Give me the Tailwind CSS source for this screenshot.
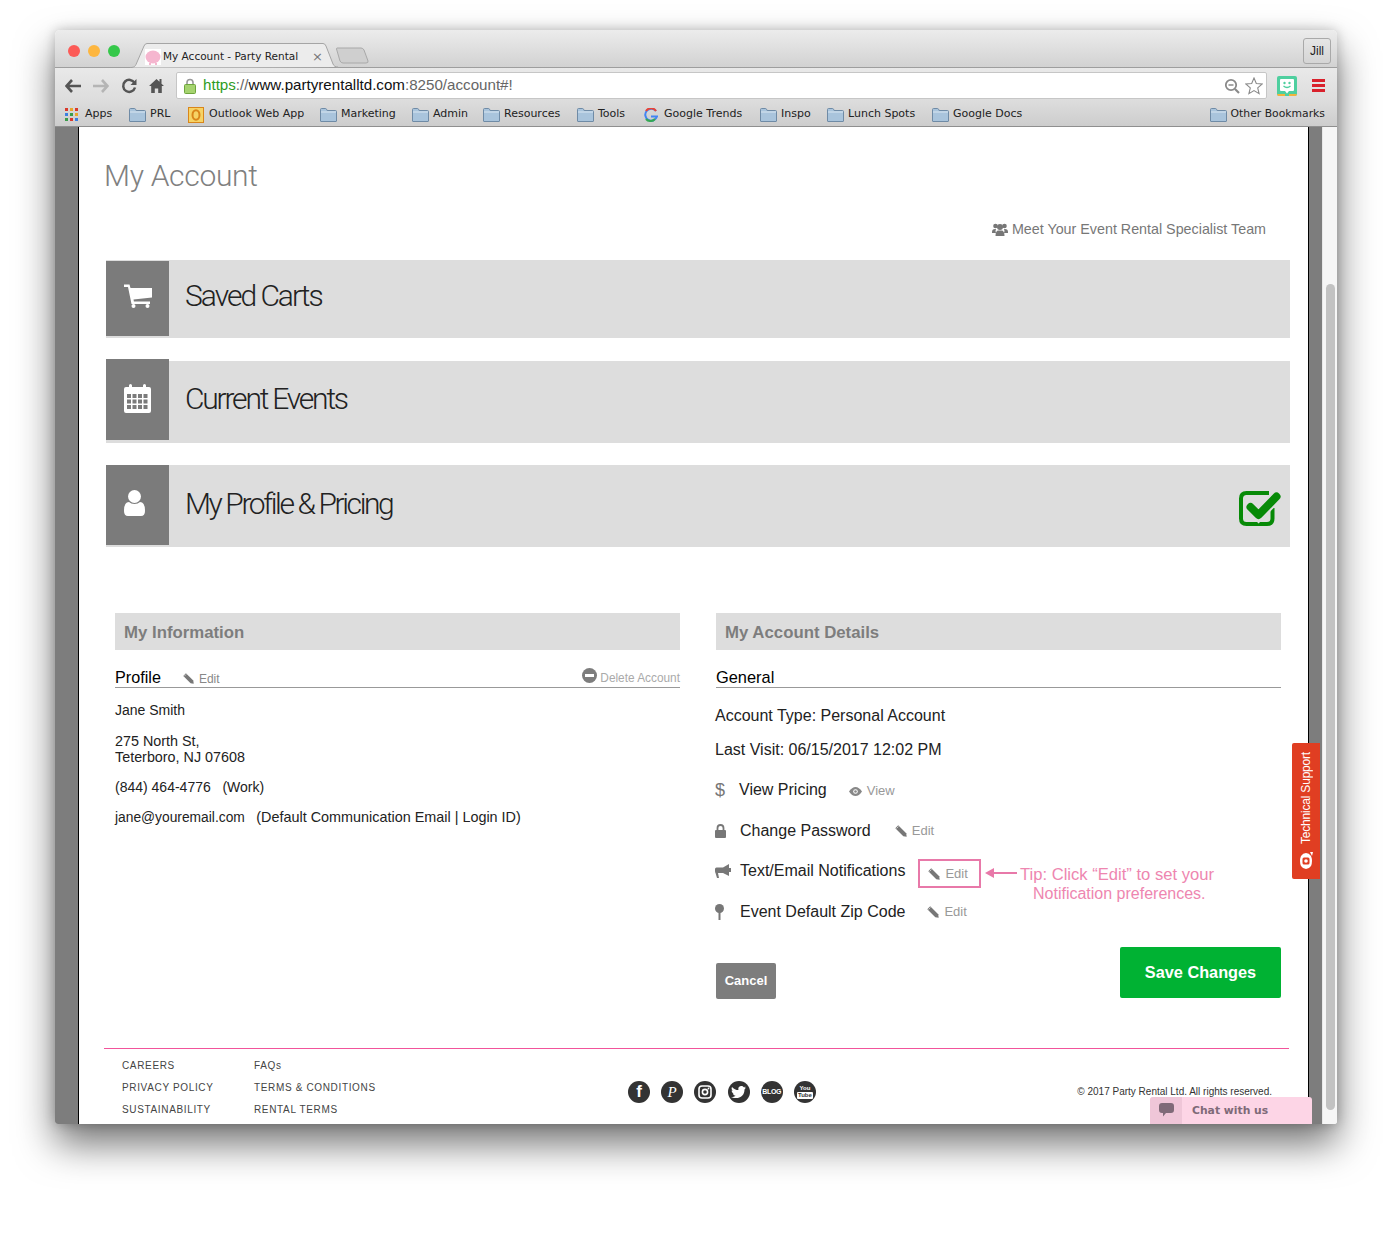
<!DOCTYPE html>
<html lang="en">
<head>
<meta charset="UTF-8">
<title>My Account - Party Rental</title>
<script src="https://cdn.jsdelivr.net/npm/@tailwindcss/browser@4"></script>
</head>
<body class="bg-white font-['Liberation_Sans',Arial,sans-serif]">
<svg class="hidden">
  <symbol id="folder" viewBox="0 0 17 14"><path d="M.5 3V1.500q0-1 1-1h4q.7 0 1 .6l.6 1.400h8.400q1 0 1 1V13q0 .5-.5.5H1q-.5 0-.5-.5z" fill="#a9c4dc" stroke="#6f8ba6"/><path d="M1 4h15" stroke="#d9e6f1"/></symbol>
  <symbol id="pencil" viewBox="0 0 12 12"><path d="M3.200.3.300 3.200l8 8 3.400.5-.5-3.400z" fill="#777"/><path d="M1.500 3.500 3.500 1.500" stroke="#ddd" stroke-width=".8"/></symbol>
</svg>

<div class="ml-[55px] pt-[30px] w-[1282px] h-[1235px]">
<div class="relative w-[1282px] h-[1094px] rounded-t-[5px] rounded-b-[3px] flex flex-col overflow-hidden shadow-[0_20px_38px_rgba(0,0,0,0.55),0_0_12px_rgba(0,0,0,0.22)]">

  <!-- title bar -->
  <div class="h-[38px] shrink-0 flex items-end border-b border-[#9e9e9e] bg-gradient-to-b from-[#ececec] to-[#d2d2d2] relative">
    <div class="flex gap-2 pl-[13px] self-start pt-[15px]">
      <span class="w-3 h-3 rounded-full bg-[#fc5b57]"></span>
      <span class="w-3 h-3 rounded-full bg-[#fdb63f]"></span>
      <span class="w-3 h-3 rounded-full bg-[#35c84a]"></span>
    </div>
    <div class="relative w-[208px] h-[25px] ml-[10px] -mb-px flex items-center pt-[2px] font-['DejaVu_Sans',sans-serif] text-[10.5px] text-[#222]">
      <svg class="absolute inset-0" width="208" height="25" viewBox="0 0 208 25"><path d="M0 24.500c4 0 5-1 6-3L14 3q1-2.500 3-2.500h176q2 0 3 2.500l7 18c1 2 2 3 5 3" fill="#ececec" stroke="#a5a5a5"/></svg>
      <svg class="relative ml-[15px] shrink-0" width="16" height="16" viewBox="0 0 16 16"><rect width="16" height="16" fill="#fff"/><ellipse cx="8" cy="8" rx="7.500" ry="6.500" fill="#f5b6cf"/><path d="M4 14h2v2H4zM10 14h2v2h-2z" fill="#f5b6cf"/></svg>
      <span class="relative ml-[2px] w-[137px] overflow-hidden whitespace-nowrap">My Account - Party Rental</span>
      <span class="relative ml-[12px] text-[13px] text-[#777] leading-none">×</span>
    </div>
    <svg class="ml-[-2px] mb-[3px]" width="33" height="17" viewBox="0 0 33 17"><path d="M1 1h24q2 0 3 2l4 11q.5 2-2 2H7q-2 0-3-2L.5 2Q.5 1 1 1z" fill="#cfcfcf" stroke="#a8a8a8"/></svg>
    <div class="ml-auto mr-[6px] mb-[3px] w-[28px] h-[26px] flex items-center justify-center rounded-[3px] border border-[#a9a9a9] text-[12px] text-[#222]">Jill</div>
  </div>

  <!-- toolbar -->
  <div class="h-[32px] shrink-0 pt-[3px] flex items-center bg-gradient-to-b from-[#e9e9e9] to-[#dddddd]">
    <svg class="ml-[10px]" width="16" height="14" viewBox="0 0 16 14"><path d="M7 1 1.500 7 7 13M2 7h14" fill="none" stroke="#555" stroke-width="2.600"/></svg>
    <svg class="ml-[12px]" width="16" height="14" viewBox="0 0 16 14"><path d="M9 1l5.500 6L9 13M14 7H0" fill="none" stroke="#b5b5b5" stroke-width="2.600"/></svg>
    <svg class="ml-[12px]" width="16" height="16" viewBox="0 0 16 16"><path d="M13.500 5A6 6 0 1 0 14 9.500" fill="none" stroke="#555" stroke-width="2.500"/><path d="M15.500 1v6h-6z" fill="#555"/></svg>
    <svg class="ml-[12px]" width="15" height="15" viewBox="0 0 15 15"><path d="M7.500 1 0 8h2.200v7h3.600v-4.500h3.400V15h3.600V8H15l-2.500-2.300V1h-2v2.800z" fill="#555"/></svg>
    <div class="ml-[12px] w-[1091px] h-[27px] flex items-center bg-white border border-[#c6c6c6] rounded-[2px]">
      <svg class="ml-[7px]" width="12" height="16" viewBox="0 0 12 16"><path d="M3 7V4.500a3 3 0 0 1 6 0V7" fill="none" stroke="#999" stroke-width="1.600"/><rect x=".5" y="6.500" width="11" height="9" rx="1" fill="#a5d36f" stroke="#6ea53c"/></svg>
      <span class="ml-[7px] text-[15.15px] whitespace-nowrap text-[#666]"><span class="text-[#2e9c1f]">https</span>://<span class="text-[#111]">www.partyrentalltd.com</span>:8250/account#!</span>
      <svg class="ml-auto" width="16" height="16" viewBox="0 0 16 16"><circle cx="7" cy="7" r="5.200" fill="none" stroke="#8a8a8a" stroke-width="1.800"/><path d="M4.500 7h5" stroke="#8a8a8a" stroke-width="1.500"/><path d="M11 11l4 4" stroke="#8a8a8a" stroke-width="2.200"/></svg>
      <svg class="ml-[5px] mr-[3px]" width="18" height="18" viewBox="0 0 18 18"><path d="M9 1l2.300 5.500 5.900.5-4.500 3.900 1.400 5.800L9 13.600l-5.100 3.100 1.400-5.800L.8 7l5.900-.5z" fill="#fff" stroke="#8a8a8a" stroke-width="1.100"/></svg>
    </div>
    <svg class="ml-[10px]" width="20" height="20" viewBox="0 0 20 20"><rect width="20" height="20" rx="2" fill="#4fcf9f"/><path d="M4 3h12q1 0 1 1v10q0 1-1 1h-4l-2 2.500L8 15H4q-1 0-1-1V4q0-1 1-1z" fill="#fff"/><circle cx="7.500" cy="7" r="1.200" fill="#4fcf9f"/><circle cx="12.500" cy="7" r="1.200" fill="#4fcf9f"/><path d="M6.500 10q3.500 3 7 0" fill="none" stroke="#4fcf9f" stroke-width="1.300"/><path d="M0 18h8v2H1zM12 18h8l-1 2h-7z" fill="#f2b33d"/></svg>
    <div class="ml-[15px] w-[13px] flex flex-col gap-[2px]">
      <span class="h-[3px] bg-[#d9212c]"></span><span class="h-[3px] bg-[#d9212c]"></span><span class="h-[3px] bg-[#d9212c]"></span>
    </div>
  </div>

  <!-- bookmarks bar -->
  <div class="h-[27px] shrink-0 flex items-center pt-[3px] border-b border-[#8f8f8f] bg-gradient-to-b from-[#dddddd] to-[#cdcdcd] font-['DejaVu_Sans',sans-serif] text-[11px] text-[#222] whitespace-nowrap">
    <div class="ml-[10px] w-[64px] flex items-center gap-[7px] shrink-0">
      <svg width="13" height="13" viewBox="0 0 13 13"><path d="M0 0h3v3H0z" fill="#d9392b"/><path d="M5 0h3v3H5z" fill="#e8a62c"/><path d="M10 0h3v3h-3z" fill="#d9392b"/><path d="M0 5h3v3H0z" fill="#3b7fe0"/><path d="M5 5h3v3H5z" fill="#3a9c4a"/><path d="M10 5h3v3h-3z" fill="#e8a62c"/><path d="M0 10h3v3H0z" fill="#3a9c4a"/><path d="M5 10h3v3H5z" fill="#d9392b"/><path d="M10 10h3v3h-3z" fill="#3b7fe0"/></svg>Apps</div>
    <div class="w-[59px] flex items-center gap-1 shrink-0"><svg width="17" height="14"><use href="#folder"/></svg>PRL</div>
    <div class="w-[132px] flex items-center gap-[5px] shrink-0"><svg width="16" height="16" viewBox="0 0 16 16"><rect x=".5" y=".5" width="15" height="15" fill="#f6d365" stroke="#d9861a"/><ellipse cx="8" cy="8" rx="3.500" ry="4.800" fill="none" stroke="#d9861a" stroke-width="2"/></svg>Outlook Web App</div>
    <div class="w-[92px] flex items-center gap-1 shrink-0"><svg width="17" height="14"><use href="#folder"/></svg>Marketing</div>
    <div class="w-[71px] flex items-center gap-1 shrink-0"><svg width="17" height="14"><use href="#folder"/></svg>Admin</div>
    <div class="w-[94px] flex items-center gap-1 shrink-0"><svg width="17" height="14"><use href="#folder"/></svg>Resources</div>
    <div class="w-[67px] flex items-center gap-1 shrink-0"><svg width="17" height="14"><use href="#folder"/></svg>Tools</div>
    <div class="w-[116px] flex items-center gap-[6px] shrink-0"><svg width="14" height="14" viewBox="0 0 14 14"><path d="M12 3A6 6 0 1 0 13 8.500H7" fill="none" stroke="#4285f4" stroke-width="2"/><path d="M12 3A6 6 0 0 0 2 3" fill="none" stroke="#ea4335" stroke-width="2"/><path d="M2 11a6 6 0 0 0 9 0" fill="none" stroke="#34a853" stroke-width="2"/></svg>Google Trends</div>
    <div class="w-[67px] flex items-center gap-1 shrink-0"><svg width="17" height="14"><use href="#folder"/></svg>Inspo</div>
    <div class="w-[105px] flex items-center gap-1 shrink-0"><svg width="17" height="14"><use href="#folder"/></svg>Lunch Spots</div>
    <div class="flex items-center gap-1 shrink-0"><svg width="17" height="14"><use href="#folder"/></svg>Google Docs</div>
    <div class="ml-auto mr-[12px] flex items-center gap-1 shrink-0 text-[10.8px]"><svg width="17" height="14"><use href="#folder"/></svg>Other Bookmarks</div>
  </div>

  <!-- browser content -->
  <div class="flex h-[997px] shrink-0">
    <div class="w-[23px] bg-[#7d7d7d]"></div>
    <div class="w-[1231px] bg-white border-x border-black overflow-hidden">
      <div class="pl-[26px] text-[#333]">
        <h1 class="-ml-px pt-[30px] h-[70px] text-[30px] leading-[38px] tracking-[-0.3px] font-['Roboto',sans-serif] font-light text-[#808080]">My Account</h1>
        <div class="w-[1161px] h-[63px] pt-[1px] flex justify-end items-center gap-1 text-[14.3px] text-[#777] leading-[18px]">
          <svg width="16" height="13" viewBox="0 0 16 13"><circle cx="3.500" cy="3" r="2.300" fill="#777"/><circle cx="12.500" cy="3" r="2.300" fill="#777"/><circle cx="8" cy="4" r="3" fill="#777"/><path d="M0 9q0-3 3-3h1q-1 2 0 4H0zM16 9q0-3-3-3h-1q1 2 0 4h4zM3.500 13q0-5.500 3-5.500h3q3 0 3 5.500z" fill="#777"/></svg>
          Meet Your Event Rental Specialist Team
        </div>

        <div class="ml-px w-[1184px] flex flex-col">
          <!-- Saved Carts -->
          <div class="h-[78px] flex items-start bg-[#dddddd]">
            <div class="mt-px h-[75px] w-[63px] flex items-center justify-center bg-[#7b7b7b]">
              <svg class="mb-[6px]" width="28" height="24" viewBox="0 0 28 24"><path d="M0 .5h5.500L6.500 4H28v9.500L9.500 15.500l.4 2H26v2.500H7.500L4 3H0z" fill="#fff"/><circle cx="9.500" cy="22" r="2" fill="#fff"/><circle cx="23.500" cy="22" r="2" fill="#fff"/></svg>
            </div>
            <div class="pl-4 pt-[17px] text-[30px] leading-[38px] tracking-[-2px] font-['Roboto',sans-serif] font-light text-[#222]">Saved Carts</div>
          </div>
          <!-- Current Events -->
          <div class="mt-[23px] h-[82px] flex items-start bg-[#dddddd]">
            <div class="-mt-[2px] h-[81px] w-[63px] flex items-center justify-center bg-[#7b7b7b]">
              <svg class="mb-[3px]" width="27" height="29" viewBox="0 0 27 29"><path d="M2 3h3V1.500a1.500 1.500 0 0 1 3 0V3h11V1.500a1.500 1.500 0 0 1 3 0V3h3q2 0 2 2v22q0 2-2 2H2q-2 0-2-2V5q0-2 2-2z" fill="#fff"/><path d="M3 10h4v4H3zM8.500 10h4v4h-4zM14 10h4v4h-4zM19.500 10h4v4h-4zM3 15.500h4v4H3zM8.500 15.500h4v4h-4zM14 15.500h4v4h-4zM19.500 15.500h4v4h-4zM3 21h4v4H3zM8.500 21h4v4h-4zM14 21h4v4h-4zM19.500 21h4v4h-4z" fill="#7b7b7b"/></svg>
            </div>
            <div class="pl-4 pt-[19px] text-[30px] leading-[38px] tracking-[-2.2px] font-['Roboto',sans-serif] font-light text-[#222]">Current Events</div>
          </div>
          <!-- My Profile & Pricing -->
          <div class="mt-[22px] h-[82px] flex items-start bg-[#dddddd]">
            <div class="h-[80px] w-[63px] flex items-center justify-center bg-[#7b7b7b]">
              <svg class="mr-[7px] mb-[5px]" width="21" height="26" viewBox="0 0 21 26"><circle cx="10.500" cy="6.500" r="6.500" fill="#fff"/><path d="M0 21q0-9 5-9 2 2 5.500 2t5.500-2q5 0 5 9 0 5-4 5H4q-4 0-4-5z" fill="#fff"/></svg>
            </div>
            <div class="pl-4 pt-[20px] text-[30px] leading-[38px] tracking-[-2.4px] font-['Roboto',sans-serif] font-light text-[#222]">My Profile &amp; Pricing</div>
            <svg class="ml-auto mr-[9px] mt-[25px]" width="42" height="36" viewBox="0 0 42 36"><path d="M33.500 18v10.500q0 5.500-5.500 5.500H7.500Q2 34 2 28.500v-20Q2 3 7.500 3H30" fill="none" stroke="#078a07" stroke-width="4"/><path d="M11.500 17l8 8L37.500 6.500" fill="none" stroke="#dddddd" stroke-width="12"/><path d="M11.500 17l8 8L37.500 6.500" fill="none" stroke="#078a07" stroke-width="8" stroke-linecap="round" stroke-linejoin="round"/></svg>
          </div>

          <!-- two columns -->
          <div class="mt-[66px] ml-[9px] grid grid-cols-[565px_565px] gap-x-9">
            <div>
              <div class="h-[37px] pl-[9px] pt-[2px] flex items-center bg-[#dddddd] text-[16.8px] font-bold text-[#7d7d7d]">My Information</div>
              <div class="mt-[18px] h-[20px] flex items-end border-b border-[#999]">
                <span class="text-[16.2px] leading-[19px] text-black">Profile</span>
                <svg class="ml-[22px] mb-[3px]" width="11" height="11"><use href="#pencil"/></svg>
                <span class="ml-[5px] text-[12px] leading-[15px] text-[#888]">Edit</span>
                <svg class="ml-auto mb-[4px]" width="15" height="15" viewBox="0 0 15 15"><circle cx="7.500" cy="7.500" r="7.500" fill="#7d7d7d"/><path d="M3 6h9v3H3z" fill="#fff"/></svg>
                <span class="ml-[3px] text-[11.85px] leading-[17px] text-[#aaa]">Delete Account</span>
              </div>
              <div class="text-[14px] leading-[16px] text-[#222]">
                <p class="mt-[14px]">Jane Smith</p>
                <p class="mt-[15px] text-[14.35px]">275 North St,<br>Teterboro, NJ 07608</p>
                <p class="mt-[14px]">(844) 464-4776 &nbsp; (Work)</p>
                <p class="mt-[14px] text-[13.8px]">jane@youremail.com &nbsp;&nbsp;<span class="text-[14.4px]">(Default Communication Email | Login ID)</span></p>
              </div>
            </div>
            <div>
              <div class="h-[37px] pl-[9px] pt-[2px] flex items-center bg-[#dddddd] text-[16.8px] font-bold text-[#7d7d7d]">My Account Details</div>
              <div class="mt-[18px] h-[20px] flex items-end border-b border-[#999]">
                <span class="text-[16.4px] leading-[19px] text-black">General</span>
              </div>
              <div class="-ml-px text-[16px] leading-[20px] text-[#222]">
                <p class="mt-[18px]">Account Type: Personal Account</p>
                <p class="mt-[14px]">Last Visit: 06/15/2017 12:02 PM</p>
                <div class="mt-[20px] flex items-center h-5">
                  <span class="w-[24px] text-[18px] text-[#777]">$</span>View Pricing
                  <svg class="ml-[22px] mt-[2px]" width="13" height="9" viewBox="0 0 13 9"><path d="M0 4.500Q3 0 6.500 0T13 4.500Q10 9 6.500 9T0 4.500z" fill="#888"/><circle cx="6.500" cy="4.500" r="2.300" fill="#fff"/><circle cx="6.500" cy="4.500" r="1.300" fill="#888"/></svg>
                  <span class="ml-[5px] mt-[2px] text-[13px] text-[#999]">View</span>
                </div>
                <div class="mt-[20px] flex items-center h-5 pt-px">
                  <span class="w-[25px]"><svg width="11" height="14" viewBox="0 0 11 14"><path d="M2.500 6V4a3 3 0 0 1 6 0v2" fill="none" stroke="#777" stroke-width="1.800"/><rect y="6" width="11" height="8" rx="1" fill="#777"/></svg></span>Change Password
                  <svg class="ml-[24px]" width="12" height="12"><use href="#pencil"/></svg>
                  <span class="ml-[5px] mt-px text-[13px] text-[#999]">Edit</span>
                </div>
                <div class="mt-[21px] flex items-center h-5 relative">
                  <span class="w-[25px]"><svg width="16" height="14" viewBox="0 0 16 14"><path d="M14 0v12L8 9H3l1 5H2L.5 9Q0 8.500 0 7V5q0-1.500 1.500-1.500H8z" fill="#777"/><path d="M15 4v4" stroke="#777" stroke-width="2"/></svg></span>Text/Email Notifications
                  <div class="ml-[13px] mt-[3px] -mb-[2px] w-[63px] h-[29px] flex items-center pl-[8px] border-2 border-[#e879a9]">
                    <svg width="12" height="12"><use href="#pencil"/></svg>
                    <span class="ml-[5px] text-[13px] text-[#999]">Edit</span>
                  </div>
                  <svg class="ml-[4px] mt-[4px]" width="32" height="10" viewBox="0 0 32 10"><path d="M0 5l9-5v10zM7 4h25v2H7z" fill="#e879a9"/></svg>
                  <div class="absolute left-[305px] top-[4px] text-[16px] leading-[19px] text-[#ee86b0] whitespace-nowrap"><span class="text-[16.6px]">Tip: Click “Edit” to set your</span><br><span class="pl-[13px]">Notification preferences.</span></div>
                </div>
                <div class="mt-[20px] flex items-center h-5 pt-px">
                  <span class="w-[25px]"><svg width="9" height="16" viewBox="0 0 9 16"><circle cx="4.500" cy="4.500" r="4.500" fill="#777"/><path d="M3.500 8h2v8h-2z" fill="#777"/></svg></span>Event Default Zip Code
                  <svg class="ml-[22px]" width="12" height="12"><use href="#pencil"/></svg>
                  <span class="ml-[5px] text-[13px] text-[#999]">Edit</span>
                </div>
              </div>
              <div class="mt-[26px] flex items-start justify-between">
                <button class="mt-[16px] w-[60px] h-[36px] rounded-[2px] bg-[#7d7d7d] text-[13px] font-bold text-white">Cancel</button>
                <button class="w-[161px] h-[51px] rounded-[2px] bg-[#00b233] text-[16.3px] font-bold text-white">Save Changes</button>
              </div>
            </div>
          </div>
        </div>

        <!-- footer -->
        <div class="mt-[49px] -ml-px w-[1185px] h-px bg-[#f2549b]"></div>
        <div class="-ml-px w-[1185px] flex items-start text-[#444]">
          <div class="ml-[18px] w-[132px] pt-[6px] text-[10px] leading-[22px] tracking-[0.65px]">
            <p>CAREERS</p><p>PRIVACY POLICY</p><p>SUSTAINABILITY</p>
          </div>
          <div class="w-[374px] pt-[6px] text-[10px] leading-[22px] tracking-[0.65px]">
            <p>FAQs</p><p>TERMS &amp; CONDITIONS</p><p>RENTAL TERMS</p>
          </div>
          <div class="mt-[32px] flex gap-[11.2px] text-white">
            <span class="w-[22px] h-[22px] rounded-full bg-[#333] flex items-center justify-center text-[17px] font-bold">f</span>
            <span class="w-[22px] h-[22px] rounded-full bg-[#333] flex items-center justify-center text-[15px] italic font-['Liberation_Serif',serif]">P</span>
            <span class="w-[22px] h-[22px] rounded-full bg-[#333] flex items-center justify-center"><svg width="14" height="14" viewBox="0 0 14 14"><rect x="1" y="1" width="12" height="12" rx="3" fill="none" stroke="#fff" stroke-width="1.600"/><circle cx="7" cy="7" r="2.600" fill="none" stroke="#fff" stroke-width="1.600"/><circle cx="10.500" cy="3.500" r=".9" fill="#fff"/></svg></span>
            <span class="w-[22px] h-[22px] rounded-full bg-[#333] flex items-center justify-center"><svg width="15" height="12" viewBox="0 0 15 12"><path d="M15 1.500l-1.700.5L14.600.500 12.800 1.300A3 3 0 0 0 7.500 4C5 4 2.600 2.800 1 .9c-.8 1.500-.3 3 .9 4l-1.300-.4c0 1.600 1 2.700 2.500 3.100H1.800c.4 1.200 1.400 2 2.800 2.100C3.300 10.700 1.700 11.200 0 11c6 3 13.500.3 13.500-7.500z" fill="#fff"/></svg></span>
            <span class="w-[22px] h-[22px] rounded-full bg-[#333] flex items-center justify-center text-[7px] font-bold tracking-[-0.3px]">BLOG</span>
            <span class="w-[22px] h-[22px] rounded-full bg-[#333] flex flex-col items-center justify-center text-[6px] leading-[7px] font-bold">You<span class="px-px bg-white text-[#333] rounded-[1px]">Tube</span></span>
          </div>
          <div class="ml-auto mr-[17px] mt-[36px] text-[10px] leading-[14px] text-[#333]">© 2017 Party Rental Ltd. All rights reserved.</div>
        </div>
      </div>
    </div>
    <div class="w-[13px] bg-[#7d7d7d]"></div>
    <div class="w-[15px] bg-[#f6f6f6] border-l border-[#e8e8e8] pl-[3px] pr-[2px]">
      <div class="mt-[157px] h-[826px] rounded-full bg-[#c2c2c2]"></div>
    </div>
  </div>

  <!-- technical support tab -->
  <div class="absolute left-[1237px] top-[713px] w-[28px] h-[136px] rounded-l-[2px] bg-[#e03e22] text-white flex flex-col items-center">
    <span class="mt-[9px] text-[12px] leading-[14px] tracking-[-0.2px] [writing-mode:vertical-rl] rotate-180 whitespace-nowrap">Technical Support</span>
    <svg class="mt-auto mb-[9px]" width="14" height="18" viewBox="0 0 14 18"><path d="M2 4q-2 5 0 10 2 3 5 3t5-3q2-5 0-10-2-3-5-3T2 4z" fill="#fff"/><rect x="3.500" y="5.500" width="7" height="7" rx="1.500" fill="#e03e22"/><circle cx="7" cy="9" r="1.800" fill="#fff"/><path d="M11 0l3 0-1 4z" fill="#fff"/></svg>
  </div>

  <!-- chat tab -->
  <div class="absolute left-[1095px] bottom-0 w-[162px] h-[27px] rounded-t-[3px] overflow-hidden flex bg-[#fdd5e6]">
    <div class="w-[32px] flex items-center justify-center bg-[#efc6d8]">
      <svg class="mb-[2px]" width="15" height="14" viewBox="0 0 15 14"><path d="M3 0h9q3 0 3 3v4q0 3-3 3H7l-3 3.500V10H3q-3 0-3-3V3q0-3 3-3z" fill="#7f6a78"/></svg>
    </div>
    <span class="pl-[10px] leading-[27px] font-['DejaVu_Sans',sans-serif] text-[10.8px] font-bold text-[#7f6a78]">Chat with us</span>
  </div>
</div>
</div>
</body>
</html>
